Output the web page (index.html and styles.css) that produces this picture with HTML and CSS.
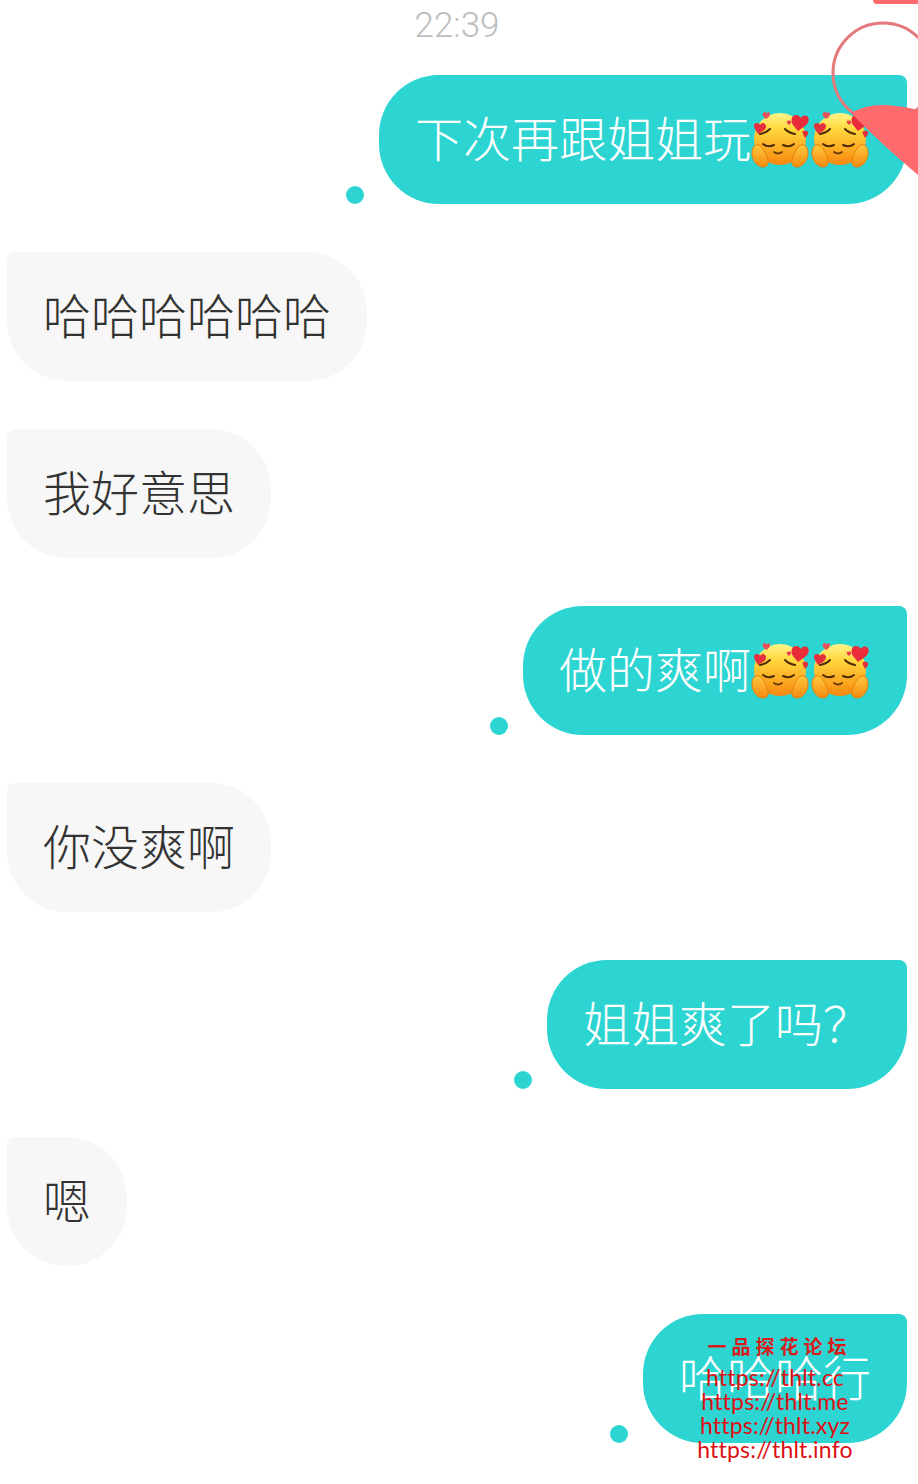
FILE: index.html
```html
<!DOCTYPE html>
<html>
<head>
    <meta charset="utf-8">
    <link rel="stylesheet" href="styles.css">
</head>
<body>
    <svg class="defs" width="0" height="0">
        <defs>
            <linearGradient id="face" x1="0" y1="0" x2="0" y2="1">
                <stop offset="0" stop-color="#fff58a"/>
                <stop offset="0.3" stop-color="#ffd83f"/>
                <stop offset="0.75" stop-color="#fba51f"/>
                <stop offset="1" stop-color="#f7860f"/>
            </linearGradient>
            <linearGradient id="hand" x1="0" y1="0" x2="0" y2="1">
                <stop offset="0" stop-color="#ffc83c"/>
                <stop offset="1" stop-color="#f58a10"/>
            </linearGradient>
            <symbol id="hug" viewBox="0 0 60 60">
                <circle cx="29" cy="29" r="26" fill="url(#face)"/>
                <path d="M9 24q6-1 10-5M34 19q4 4 10 5" fill="none" stroke="#4f2c08" stroke-width="2" stroke-linecap="round"/>
                <path d="M12 34q5 4 11 1M32 35q6 3 11-1" fill="none" stroke="#4f2c08" stroke-width="2" stroke-linecap="round"/>
                <path d="M23 42q4 3 8 0" fill="none" stroke="#6b3a0c" stroke-width="1.8" stroke-linecap="round"/>
                <path d="M1 43c0-6 3-9 7-8 4 2 7 8 9 14 1 5-1 8-5 8-6 0-11-7-11-14zM57 43c0-6-3-9-7-8-4 2-7 8-9 14-1 5 1 8 5 8 6 0 11-7 11-14z" fill="url(#hand)" stroke="#e67f0c" stroke-width="1"/>
                <path d="M42 15c-3-5-1-10 3-10 3 0 4 2 5 3 1-2 3-3 6-2 3 2 2 7-2 10l-7 5z" fill="#ea2c3a"/>
                <path d="M4 19c-2-3-1-6 2-6 2 0 3 1 3 2 1-2 3-3 5-1 2 2 1 5-2 7l-5 3z" fill="#e42f3d"/>
                <path d="M12 6c-1-2 0-4 2-4 1 0 1 1 2 1 1-1 3-1 3 1s-2 4-4 5z" fill="#e8505a"/>
                <path d="M36 13c-1-2 1-3 2-2 1-1 3 0 2 2l-2 2z" fill="#e8404c"/>
                <path d="M52 24c-1-2 0-4 2-3 1-1 4 0 3 3-1 2-2 3-3 4z" fill="#e42f3d"/>
            </symbol>
        </defs>
    </svg>

    <div class="chat">
        <div class="time">22:39</div>

        <div class="row right first">
            <span class="dot"></span>
            <div class="bubble mine">下次再跟姐姐玩<svg class="emoji"><use href="#hug"/></svg><svg class="emoji"><use href="#hug"/></svg></div>
        </div>
        <div class="row left">
            <div class="bubble theirs">哈哈哈哈哈哈</div>
        </div>
        <div class="row left">
            <div class="bubble theirs">我好意思</div>
        </div>
        <div class="row right">
            <span class="dot"></span>
            <div class="bubble mine">做的爽啊<svg class="emoji"><use href="#hug"/></svg><svg class="emoji"><use href="#hug"/></svg></div>
        </div>
        <div class="row left">
            <div class="bubble theirs">你没爽啊</div>
        </div>
        <div class="row right">
            <span class="dot"></span>
            <div class="bubble mine">姐姐爽了吗&#65311;</div>
        </div>
        <div class="row left">
            <div class="bubble theirs">嗯</div>
        </div>
        <div class="row right">
            <span class="dot"></span>
            <div class="bubble mine">哈哈哈行</div>
        </div>
    </div>

    <div class="top-tab"></div>
    <svg class="pointer" width="88" height="160" viewBox="830 20 88 160">
        <circle cx="883" cy="73" r="50" fill="none" stroke="#e57a7c" stroke-width="3"/>
        <path d="M851 113q16-9 34-8 18 1 33 5v65q-38-32-67-62z" fill="#ff6b6d"/>
    </svg>

    <div class="mark">
        <div class="mark-title">一品探花论坛</div>
        <div>https://thlt.cc</div>
        <div>https://thlt.me</div>
        <div>https://thlt.xyz</div>
        <div>https://thlt.info</div>
    </div>
</body>
</html>
```
FILE: styles.css
```css
* {
    box-sizing: border-box;
}

body {
    margin: 0;
    height: 1484px;
    overflow: hidden;
    position: relative;
    background-color: #fff;
    font-family: "Noto Sans CJK SC", "Noto Sans", sans-serif;
}

.defs {
    position: absolute;
}

.chat {
    padding: 0 11px 0 7px;
}

.time {
    height: 49px;
    padding-top: 6px;
    text-align: center;
    font-size: 35px;
    line-height: 40px;
    font-family: "Roboto", sans-serif;
    font-weight: 300;
    color: #bdbdbd;
}

.row {
    display: flex;
    margin-top: 48px;
}

.row.first {
    margin-top: 26px;
}

.right {
    justify-content: flex-end;
}

.bubble {
    display: flex;
    align-items: center;
    height: 129px;
    padding: 0 36px 8px;
    font-size: 48px;
    font-weight: 300;
    white-space: nowrap;
    border-radius: 60px;
}

.mine {
    background-color: #2dd5d2;
    color: #fff;
    border-top-right-radius: 8px;
}

.theirs {
    background-color: #f7f7f7;
    color: #333;
    border-top-left-radius: 8px;
}

.dot {
    width: 18px;
    height: 18px;
    margin: 111px 15px 0 0;
    border-radius: 50%;
    background-color: #2dd5d2;
}

.emoji {
    width: 60px;
    height: 60px;
    margin-top: 8px;
    flex-shrink: 0;
}

.top-tab {
    position: absolute;
    top: 0;
    right: 0;
    width: 45px;
    height: 4px;
    border-bottom-left-radius: 4px;
    background-color: #ff6b6d;
}

.pointer {
    position: absolute;
    top: 20px;
    right: 0;
}

.mark {
    position: absolute;
    left: 675px;
    top: 1333px;
    width: 200px;
    text-align: center;
    font-family: "Lato", sans-serif;
    font-size: 23px;
    line-height: 24px;
    letter-spacing: 0.2px;
    color: #dc0f14;
}

.mark-title {
    margin-bottom: 6px;
    padding-left: 9px;
    font-family: "Noto Sans CJK SC", sans-serif;
    font-size: 19px;
    font-weight: 700;
    line-height: 26px;
    letter-spacing: 5px;
    color: #d81c1c;
}
```
